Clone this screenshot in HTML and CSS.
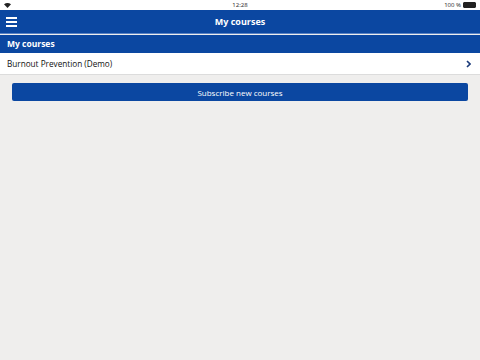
FILE: index.html
```html
<!DOCTYPE html>
<html lang="en">
<head>
    <meta charset="UTF-8">
    <title>My courses</title>
    <link rel="stylesheet" href="styles.css">
</head>
<body>
    <div class="status-bar">
        <span class="wifi">
            <svg width="7" height="5" viewBox="0 0 7 5"><path d="M0 1.2 Q3.5 -1 7 1.2 L3.5 5 Z" fill="#222"/></svg>
        </span>
        <span class="clock">12:28</span>
        <span class="battery">100 % <span class="battery-icon"><span class="battery-fill"></span></span></span>
    </div>

    <header class="nav-bar">
        <button class="menu-btn" aria-label="Menu">
            <span></span><span></span><span></span>
        </button>
        <h1>My courses</h1>
    </header>

    <div class="section-header">My courses</div>

    <ul class="course-list">
        <li class="course-row">
            <span>Burnout Prevention (Demo)</span>
            <svg class="chevron" width="5" height="8" viewBox="0 0 5 8"><path d="M1 1 L4 4 L1 7" fill="none" stroke="#1a3a7a" stroke-width="1.6"/></svg>
        </li>
    </ul>

    <div class="actions">
        <button class="subscribe-btn">Subscribe new courses</button>
    </div>
</body>
</html>
```

FILE: styles.css
```css
body {
    margin: 0;
    padding: 0;
    font-family: 'Open Sans', sans-serif;
    background: #efeeed;
    height: 360px;
}

/* Status bar */
.status-bar {
    height: 10px;
    background: #fff;
    display: flex;
    align-items: center;
    justify-content: space-between;
    padding: 0 4px;
    font-size: 6px;
    color: #222;
    position: relative;
}

.wifi {
    display: flex;
    width: 40px;
}

.clock {
    position: absolute;
    left: 0;
    right: 0;
    text-align: center;
}

.battery {
    display: flex;
    align-items: center;
    gap: 2px;
}

.battery-icon {
    width: 11px;
    height: 4px;
    border: 0.5px solid #222;
    border-radius: 1px;
    display: flex;
}

.battery-fill {
    flex: 1;
    background: #222;
}

/* Navigation */
.nav-bar {
    height: 23px;
    background: #0b47a1;
    border-bottom: 1px solid #5a83c4;
    display: flex;
    align-items: center;
    position: relative;
}

.nav-bar h1 {
    margin: 0;
    flex: 1;
    text-align: center;
    color: #fff;
    font-size: 9px;
    font-weight: bold;
}

.menu-btn {
    position: absolute;
    left: 6px;
    top: 7px;
    width: 11px;
    padding: 0;
    border: none;
    background: none;
    display: flex;
    flex-direction: column;
    gap: 2px;
}

.menu-btn span {
    height: 2px;
    background: #fff;
}

/* Section */
.section-header {
    margin-top: 1px;
    height: 18px;
    line-height: 18px;
    background: #0b47a1;
    color: #fff;
    font-size: 8.5px;
    font-weight: bold;
    padding-left: 7px;
}

.course-list {
    list-style: none;
    margin: 0;
    padding: 0;
}

.course-row {
    height: 21px;
    background: #fff;
    border-bottom: 1px solid #dcdcdc;
    display: flex;
    align-items: center;
    justify-content: space-between;
    padding: 0 9px 0 7px;
    font-size: 8.2px;
    color: #111;
}

/* Buttons */
.actions {
    padding: 8px 12px;
}

.subscribe-btn {
    display: block;
    width: 100%;
    height: 18px;
    background: #0b47a1;
    color: #fff;
    border: none;
    border-radius: 2px;
    font-family: 'Open Sans', sans-serif;
    font-size: 8px;
    padding: 0;
}
```
